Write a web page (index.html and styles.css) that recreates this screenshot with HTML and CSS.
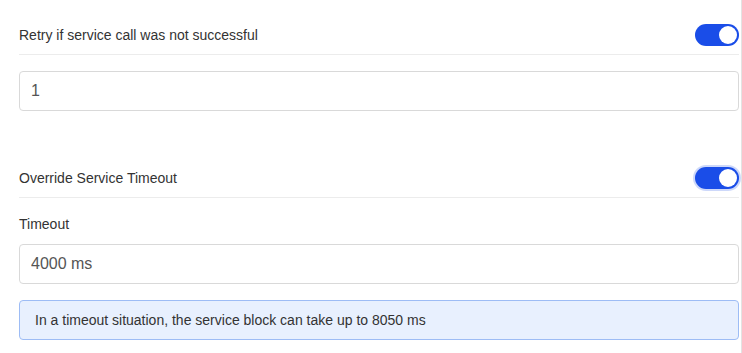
FILE: index.html
```html
<!DOCTYPE html>
<html lang="en">
<head>
  <meta charset="UTF-8" />
  <title>Service Settings</title>
  <link rel="stylesheet" href="styles.css">
</head>
<body>
  <div class="panel">
    <div class="row">
      <span class="row-label">Retry if service call was not successful</span>
      <span class="switch on"><span class="knob"></span></span>
    </div>
    <input type="text" class="field" value="1" />

    <div class="row spaced">
      <span class="row-label">Override Service Timeout</span>
      <span class="switch on focus"><span class="knob"></span></span>
    </div>
    <label class="field-label">Timeout</label>
    <input type="text" class="field" value="4000 ms" />

    <div class="note">In a timeout situation, the service block can take up to 8050 ms</div>
  </div>
</body>
</html>
```

FILE: styles.css
```css
* {
  box-sizing: border-box;
}

body {
  margin: 0;
  font-family: "Liberation Sans", Arial, sans-serif;
  background: #fff;
  color: #333;
}

.panel {
  width: 742px;
  min-height: 100vh;
  padding: 0 2px 0 19px;
  border-right: 1px solid #e3e3e3;
}

.row {
  display: flex;
  justify-content: space-between;
  align-items: center;
  padding: 24px 0 8px;
  border-bottom: 1px solid #ececec;
  font-size: 14px;
}

.row.spaced {
  margin-top: 32px;
}

.switch {
  position: relative;
  width: 44px;
  height: 22px;
  border-radius: 11px;
  background: #ccc;
}

.switch.on {
  background: #1a4de8;
}

.switch.focus {
  box-shadow: 0 0 0 2px rgba(26, 77, 232, 0.22);
}

.knob {
  position: absolute;
  top: 2px;
  left: 2px;
  width: 18px;
  height: 18px;
  border-radius: 50%;
  background: #fff;
}

.switch.on .knob {
  left: 24px;
}

.field {
  display: block;
  width: 100%;
  height: 40px;
  margin-top: 16px;
  padding: 0 11px;
  border: 1px solid #d9d9d9;
  border-radius: 4px;
  font-family: inherit;
  font-size: 16px;
  color: #555;
  outline: none;
}

.field-label {
  display: block;
  margin-top: 16px;
  line-height: 20px;
  font-size: 14px;
}

.field-label + .field {
  margin-top: 10px;
}

.note {
  margin-top: 16px;
  padding: 10px 15px;
  line-height: 18px;
  font-size: 14px;
  background: #e8f0fe;
  border: 1px solid #9dbcf5;
  border-radius: 4px;
}
```
